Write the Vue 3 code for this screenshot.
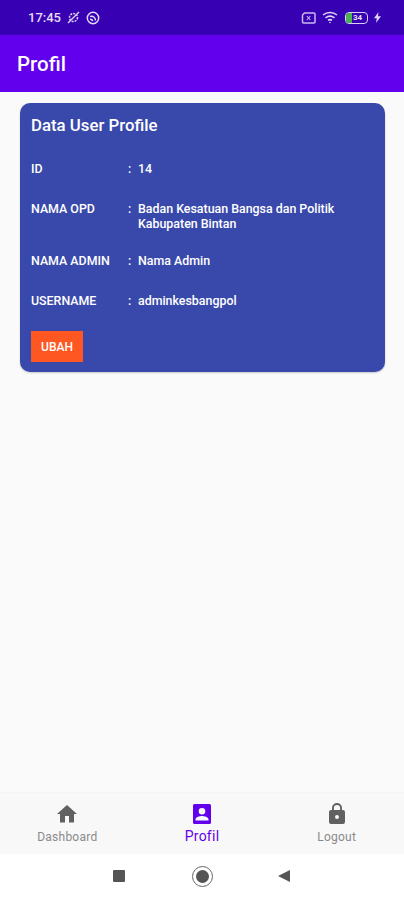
<script setup>
const rows = [
  { label: 'ID', value: '14' },
  { label: 'NAMA OPD', value: 'Badan Kesatuan Bangsa dan Politik Kabupaten Bintan' },
  { label: 'NAMA ADMIN', value: 'Nama Admin' },
  { label: 'USERNAME', value: 'adminkesbangpol' },
]
</script>

<template>
  <div class="screen">
    <div class="statusbar">
      <div class="status-left">
        <span class="time">17:45</span>
        <svg width="15" height="15" viewBox="0 0 15 15" fill="none" stroke="#d9ccf5" stroke-width="1.5">
          <circle cx="7.5" cy="7.5" r="4" stroke-dasharray="2 1" />
          <path d="M2 13 13 2" />
        </svg>
        <svg width="14" height="14" viewBox="0 0 14 14" fill="none" stroke="#e2d8f8" stroke-width="1.5">
          <circle cx="7" cy="7" r="5.7" />
          <path d="M4 5.5c3-1 5.5 1 5.5 4M4 8.3c1.5 0 2.5 1 2.5 2" />
        </svg>
      </div>
      <div class="status-right">
        <svg width="15" height="12" viewBox="0 0 15 12" fill="none" stroke="#cbb9f0" stroke-width="1.5">
          <path d="M3.500 1H13a1 1 0 0 1 1 1v8a1 1 0 0 1-1 1H2.500a1 1 0 0 1-1-1V3z" />
          <path d="M5.800 4l3.500 4M9.300 4 5.800 8" stroke-width="1.1" />
        </svg>
        <svg class="wifi" width="17" height="13" viewBox="0 0 17 13" fill="none" stroke="#e0d6f7" stroke-width="1.6">
          <path d="M1 4c4-3.300 10-3.300 14 0M3.500 6.800c2.700-2 6.300-2 9 0M6 9.300c1.300-.8 2.700-.8 4 0" />
          <circle cx="8" cy="11.500" r=".8" fill="#e0d6f7" stroke="none" />
        </svg>
        <div class="battery">
          <span class="battery-fill"></span>
          <span class="battery-num">34</span>
        </div>
        <svg width="7" height="11" viewBox="0 0 7 11" fill="#e0d6f7">
          <path d="M4.500 0 0 6.300h2.800L2 11l5-6.800H4z" />
        </svg>
      </div>
    </div>

    <header class="appbar">Profil</header>

    <main class="content">
      <section class="card">
        <h2 class="card-title">Data User Profile</h2>
        <div class="rows">
          <div v-for="row in rows" :key="row.label" class="row">
            <span class="label">{{ row.label }}</span>
            <span class="colon">:</span>
            <span class="value">{{ row.value }}</span>
          </div>
        </div>
        <button class="edit-btn">UBAH</button>
      </section>
    </main>

    <nav class="bottom-nav">
      <div class="nav-item">
        <svg width="24" height="24" viewBox="0 0 24 24" fill="#616161">
          <path d="M10 20.500v-6.500h4v6.500h5v-8.500h3L12 3 2 12h3v8.500z" />
        </svg>
        <span>Dashboard</span>
      </div>
      <div class="nav-item active">
        <svg width="24" height="24" viewBox="0 0 24 24" fill="#6200ee">
          <path d="M3 3.500A1.500 1.500 0 0 1 4.500 2h15A1.500 1.500 0 0 1 21 3.500v17a1.500 1.500 0 0 1-1.500 1.500h-15A1.500 1.500 0 0 1 3 20.500zM12 6a3.300 3.300 0 1 0 0 6.600A3.300 3.300 0 0 0 12 6zM5.500 18.500h13v-1.200c0-2.200-4.300-3.400-6.500-3.400s-6.500 1.200-6.500 3.400z" fill-rule="evenodd" />
        </svg>
        <span>Profil</span>
      </div>
      <div class="nav-item">
        <svg width="24" height="24" viewBox="0 0 24 24" fill="#616161">
          <path d="M18 8h-1V6A5 5 0 0 0 7 6v2H6a2 2 0 0 0-2 2v10a2 2 0 0 0 2 2h12a2 2 0 0 0 2-2V10a2 2 0 0 0-2-2zM8.900 6a3.100 3.100 0 0 1 6.200 0v2H8.900zM12 17a2 2 0 1 1 0-4 2 2 0 0 1 0 4z" fill-rule="evenodd" />
        </svg>
        <span>Logout</span>
      </div>
    </nav>

    <div class="system-nav">
      <span class="sys-square"></span>
      <span class="sys-circle"><i></i></span>
      <span class="sys-back"></span>
    </div>
  </div>
</template>

<style scoped>
.screen {
  width: 404px;
  height: 900px;
  display: flex;
  flex-direction: column;
  background: #fafafa;
  font-family: Roboto, "Liberation Sans", sans-serif;
  overflow: hidden;
}

.statusbar {
  height: 35px;
  flex: none;
  background: #3700b3;
  display: flex;
  justify-content: space-between;
  align-items: center;
  padding: 0 23px 0 28px;
  box-sizing: border-box;
  color: #e6dff8;
}

.status-left,
.status-right {
  display: flex;
  align-items: center;
}

.status-left {
  gap: 5px;
}

.status-right {
  gap: 6px;
}

.time {
  font-size: 13px;
  font-weight: 500;
}

.battery {
  width: 23px;
  height: 12px;
  box-sizing: border-box;
  border: 1.500px solid #d8cdf5;
  border-radius: 4px;
  display: flex;
  align-items: center;
  overflow: hidden;
}

.battery-fill {
  width: 6px;
  height: 100%;
  background: #4caf50;
  flex: none;
}

.battery-num {
  font-size: 8px;
  font-weight: 700;
  margin-left: 1px;
  line-height: 1;
}

.appbar {
  height: 57px;
  flex: none;
  background: #6200ee;
  color: #fff;
  font-size: 20.500px;
  font-weight: 500;
  display: flex;
  align-items: center;
  padding-left: 17px;
  box-sizing: border-box;
}

.content {
  flex: 1;
  padding: 11px 19px 0 20px;
}

.card {
  background: #3949ab;
  border-radius: 10px;
  color: #fff;
  padding: 13px 11px 10px;
  box-shadow: 0 1px 2px rgba(0, 0, 0, 0.2);
}

.card-title {
  margin: 0;
  font-size: 16.800px;
  font-weight: 500;
  line-height: 19px;
}

.rows {
  display: flex;
  flex-direction: column;
  margin-top: 26px;
  gap: 25px;
}

.row {
  display: flex;
  font-size: 12.400px;
  font-weight: 500;
  line-height: 15px;
}

.label {
  width: 97px;
  flex: none;
}

.colon {
  width: 10px;
  flex: none;
}

/* wrapped value sits a bit tighter to the next row */
.value {
  flex: 1;
  padding-right: 20px;
  margin-bottom: -3px;
}

.edit-btn {
  display: block;
  margin-top: 23px;
  width: 52px;
  height: 31px;
  border: none;
  padding: 0;
  background: #ff5722;
  color: #fff;
  font-family: inherit;
  font-size: 12px;
  font-weight: 500;
}

.bottom-nav {
  height: 61px;
  flex: none;
  background: #f8f8f8;
  display: grid;
  grid-template-columns: repeat(3, 1fr);
  box-shadow: 0 -1px 1px rgba(0, 0, 0, 0.02);
}

.nav-item {
  display: flex;
  flex-direction: column;
  align-items: center;
  padding-top: 9px;
  gap: 3px;
  font-size: 12px;
  color: #8a8a8a;
  line-height: 16px;
  letter-spacing: 0.25px;
}

.nav-item.active {
  color: #6200ee;
  font-size: 14px;
  gap: 2px;
}

.system-nav {
  height: 46px;
  flex: none;
  background: #fff;
  display: flex;
  align-items: center;
  justify-content: center;
  gap: 67px;
  padding: 0 2px 2px 0;
  box-sizing: border-box;
}

.sys-square {
  width: 12px;
  height: 12px;
  background: #555;
  border-radius: 1px;
}

.sys-circle {
  width: 19px;
  height: 19px;
  border: 1px solid #666;
  border-radius: 50%;
  display: flex;
  align-items: center;
  justify-content: center;
}

.sys-circle i {
  width: 13px;
  height: 13px;
  border-radius: 50%;
  background: #555;
}

.sys-back {
  width: 0;
  height: 0;
  margin-left: -2px;
  border-top: 6.500px solid transparent;
  border-bottom: 6.500px solid transparent;
  border-right: 12px solid #555;
}
</style>
